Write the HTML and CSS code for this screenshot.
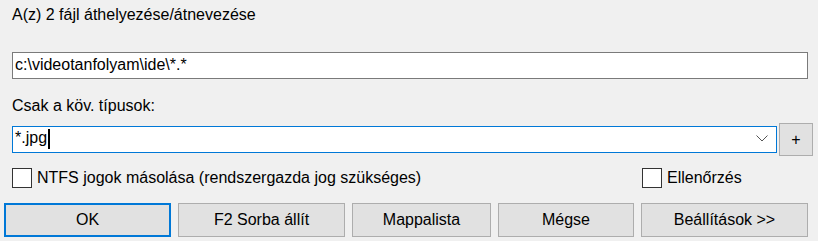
FILE: index.html
```html
<!DOCTYPE html>
<html lang="hu">
<head>
    <meta charset="UTF-8">
    <title>Áthelyezés / átnevezés</title>
    <link rel="stylesheet" href="styles.css">
</head>
<body>
    <div class="dialog">
        <div class="title">A(z) 2 fájl áthelyezése/átnevezése</div>

        <div class="field path">c:\videotanfolyam\ide\*.*</div>

        <div class="label">Csak a köv. típusok:</div>

        <div class="combo-row">
            <div class="field combo">
                <span class="value">*.jpg</span><span class="caret"></span>
                <svg class="arrow" width="12" height="7" viewBox="0 0 12 7">
                    <path d="M0.5 0.5 L6 6 L11.5 0.5" fill="none" stroke="#555" stroke-width="1"/>
                </svg>
            </div>
            <button class="btn plus">+</button>
        </div>

        <div class="check-row">
            <label class="check ntfs"><span class="box"></span>NTFS jogok másolása (rendszergazda jog szükséges)</label>
            <label class="check"><span class="box"></span>Ellenőrzés</label>
        </div>

        <div class="buttons">
            <button class="btn wide default">OK</button>
            <button class="btn wide">F2 Sorba állít</button>
            <button class="btn mid">Mappalista</button>
            <button class="btn small">Mégse</button>
            <button class="btn wide">Beállítások &gt;&gt;</button>
        </div>
    </div>
</body>
</html>
```

FILE: styles.css
```css
html, body {
    margin: 0;
    padding: 0;
    background-color: #f0f0f0;
}
body {
    font-family: "Liberation Sans", Arial, sans-serif;
    font-size: 16px;
    color: #000;
}
.dialog {
    width: 818px;
    height: 241px;
    display: flex;
    flex-direction: column;
}
.title {
    margin: 5px 0 0 12px;
    line-height: 20px;
    height: 20px;
}
.field {
    box-sizing: border-box;
    height: 27px;
    background-color: #fff;
    border: 1px solid #7a7a7a;
    padding: 0 2px 2px;
    display: flex;
    align-items: center;
}
.path {
    margin: 27px 0 0 12px;
    width: 796px;
}
.label {
    margin: 17px 0 0 12px;
    line-height: 20px;
    height: 20px;
}
.combo-row {
    margin: 6px 0 0 12px;
    display: flex;
    align-items: center;
    gap: 2px;
}
.combo {
    width: 765px;
    border-color: #0078d7;
}
.caret {
    display: inline-block;
    width: 2px;
    height: 20px;
    background-color: #000;
    margin: 2px 0 0 1px;
}
.arrow {
    margin-left: auto;
    margin-right: 6px;
}
.btn {
    box-sizing: border-box;
    font-family: inherit;
    font-size: 16px;
    color: #000;
    background-color: #e1e1e1;
    border: 1px solid #adadad;
    padding: 0;
    margin: 0;
    height: 34px;
}
.plus {
    width: 34px;
    height: 33px;
    margin-top: 1px;
}
.check-row {
    margin: 12px 0 0 12px;
    display: flex;
    height: 20px;
}
.check {
    display: flex;
    align-items: center;
    gap: 5px;
    line-height: 20px;
}
.ntfs {
    width: 630px;
}
.box {
    box-sizing: border-box;
    width: 20px;
    height: 20px;
    background-color: #fff;
    border: 1px solid #333;
}
.buttons {
    margin: 15px 0 0 4px;
    display: flex;
    gap: 7px;
}
.wide {
    width: 167px;
}
.mid {
    width: 139px;
}
.small {
    width: 136px;
}
.default {
    border: 2px solid #0078d7;
}
```
